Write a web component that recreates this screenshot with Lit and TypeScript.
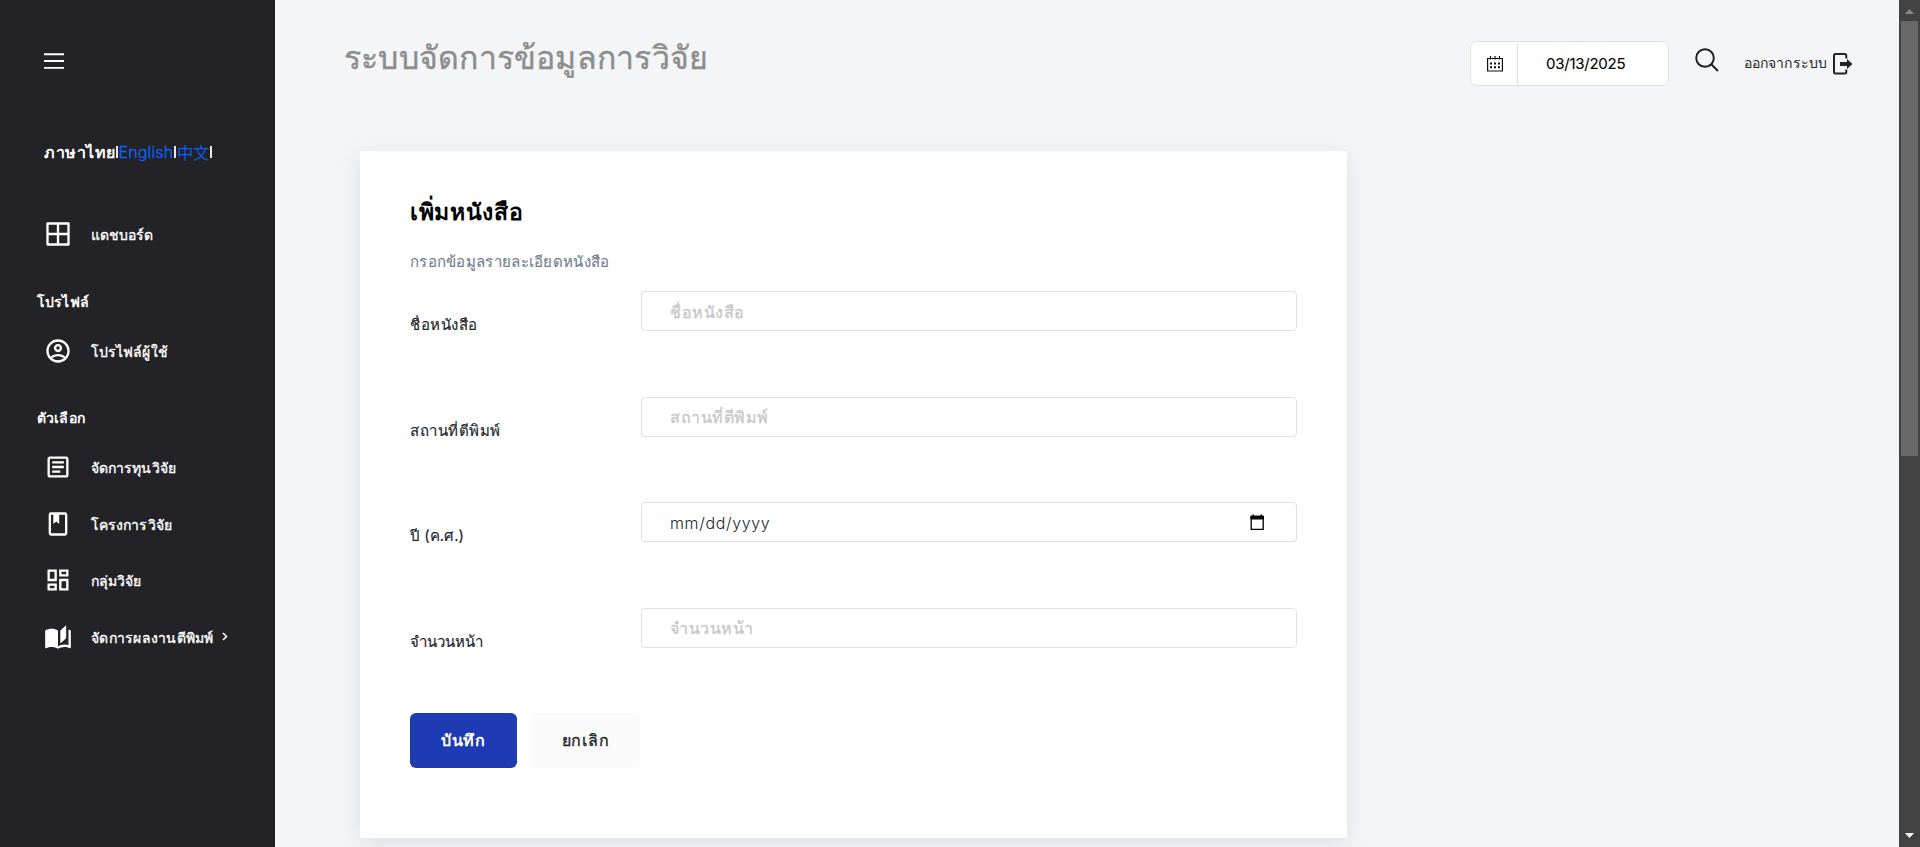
import { LitElement, html, css, svg, nothing } from "lit";
import { customElement } from "lit/decorators.js";

const icons = {
  dashboard: svg`<path d="M21 2H3a1 1 0 0 0-1 1v18a1 1 0 0 0 1 1h18a1 1 0 0 0 1-1V3a1 1 0 0 0-1-1zm-10 18H4v-7h7v7zm0-9H4V4h7v7zm9 9h-7v-7h7v7zm0-9h-7V4h7v7z"/>`,
  user: svg`<path d="M12 2A10 10 0 0 0 2 12a10 10 0 0 0 10 10 10 10 0 0 0 10-10A10 10 0 0 0 12 2M7.07 18.28c.43-.9 3.05-1.78 4.93-1.78s4.5.88 4.93 1.78A7.9 7.9 0 0 1 12 20c-1.86 0-3.57-.64-4.93-1.72m11.29-1.45c-1.43-1.74-4.9-2.33-6.36-2.33s-4.93.59-6.36 2.33A7.93 7.93 0 0 1 4 12c0-4.41 3.59-8 8-8s8 3.59 8 8c0 1.82-.62 3.5-1.64 4.83M12 6c-1.94 0-3.5 1.56-3.5 3.5S10.06 13 12 13s3.5-1.56 3.5-3.5S13.94 6 12 6m0 5a1.5 1.5 0 0 1-1.5-1.5A1.5 1.5 0 0 1 12 8a1.5 1.5 0 0 1 1.5 1.5A1.5 1.5 0 0 1 12 11z"/>`,
  note: svg`<path d="M5 3c-1.11 0-2 .89-2 2v14c0 1.11.89 2 2 2h14c1.11 0 2-.89 2-2V5c0-1.11-.89-2-2-2H5m0 2h14v14H5V5m2 2v2h10V7H7m0 4v2h10v-2H7m0 4v2h7v-2H7z"/>`,
  book: svg`<path d="M18 2a2 2 0 0 1 2 2v16a2 2 0 0 1-2 2H6a2 2 0 0 1-2-2V4a2 2 0 0 1 2-2h12m0 2h-5v8l-2.5-2.25L8 12V4H6v16h12V4z"/>`,
  group: svg`<path d="M19 5v2h-4V5h4M9 5v6H5V5h4m10 8v6h-4v-6h4M9 17v2H5v-2h4M21 3h-8v6h8V3M11 3H3v10h8V3m10 8h-8v10h8V11m-10 4H3v6h8v-6z"/>`,
  open: svg`<path d="M19 2l-5 4.500v11l5-4.500V2M6.500 5C4.550 5 2.450 5.400 1 6.500v14.660c0 .250.250.500.500.500.100 0 .150-.070.250-.070 1.350-.650 3.300-1.090 4.750-1.090 1.950 0 4.050.400 5.500 1.500 1.350-.850 3.800-1.500 5.500-1.500 1.650 0 3.350.310 4.750 1.060.100.050.150.030.250.030.250 0 .500-.250.500-.500V6.500c-.600-.450-1.250-.750-2-1V19c-1.100-.350-2.300-.500-3.500-.500-1.700 0-4.150.650-5.500 1.500V6.500C10.550 5.400 8.450 5 6.500 5z"/>`,
};

const shared = css`
  * { box-sizing: border-box; }
  svg { display: block; flex: none; }
`;

@customElement("side-bar")
export class SideBar extends LitElement {
  static styles = [shared, css`
    :host { display: flex; flex-direction: column; width: 275px; flex: none; background: #232227; color: #fff; font-size: 14px; }
    .burger { margin: 52px 0 0 44px; }
    .langs { display: flex; align-items: center; margin: 69px 0 0 44px; height: 26px; font-size: 16px; white-space: nowrap; font-weight: 300; }
    .current { font-weight: 700; letter-spacing: .5px; }
    .lang { color: #0d62ff; -webkit-text-stroke: .3px #0d62ff; }
    .english { letter-spacing: .15px; }
    .bar { width: 2px; height: 12px; margin: 0 1px 0 1px; background: #e8e8ea; }
    .current + .bar { margin-left: 0; }
    .first { margin-top: 41px; }
    .item { display: flex; align-items: center; height: 56.5px; padding-left: 44px; white-space: nowrap; -webkit-text-stroke: .35px #fff; }
    .icon { width: 28px; height: 28px; margin-right: 19px; fill: #fff; }
    .text { padding-top: 1.5px; letter-spacing: .08px; }
    .head { height: 24px; line-height: 24px; padding-left: 37px; font-weight: 700; letter-spacing: .15px; margin: 27px 0 9px; }
    .wide { letter-spacing: .25px; }
    .chev { margin-left: 8px; }
  `];
  item(icon: keyof typeof icons, label: string, more = false) {
    return html`<div class="item"><svg class="icon" viewBox="0 0 24 24">${icons[icon]}</svg><span class="text ${more ? "wide" : ""}">${label}</span>${more
      ? html`<svg class="chev" width="6" height="9" viewBox="0 0 6 9" fill="none" stroke="#fff" stroke-width="1.6"><path d="M1 1l3.500 3.500L1 8"/></svg>` : nothing}</div>`;
  }
  render() {
    return html`
      <svg class="burger" width="20" height="18" viewBox="0 0 20 18" stroke="#fff" stroke-width="1.9"><path d="M0 2.200h20M0 9h20M0 15.900h20"/></svg>
      <div class="langs"><span class="current">ภาษาไทย</span><i class="bar"></i><span class="lang english">English</span><i class="bar"></i><span class="lang">中文</span><i class="bar"></i></div>
      <div class="first">${this.item("dashboard", "แดชบอร์ด")}</div>
      <div class="head">โปรไฟล์</div>
      ${this.item("user", "โปรไฟล์ผู้ใช้")}
      <div class="head">ตัวเลือก</div>
      ${this.item("note", "จัดการทุนวิจัย")}
      ${this.item("book", "โครงการวิจัย")}
      ${this.item("group", "กลุ่มวิจัย")}
      ${this.item("open", "จัดการผลงานตีพิมพ์", true)}
    `;
  }
}

@customElement("top-bar")
export class TopBar extends LitElement {
  static styles = [shared, css`
    :host { display: flex; height: 151px; padding: 41px 46px 0 69px; align-items: flex-start; }
    .title { margin: -11px auto 0 0; font-size: 32px; font-weight: 400; line-height: 56px; color: #8d8d8d; -webkit-text-stroke: .4px #8d8d8d; white-space: nowrap; letter-spacing: .22px; }
    .date { display: flex; width: 199px; height: 45px; border: 1px solid #dee0e3; border-radius: 7px; background: #fff; padding: 1px 0; }
    .cal { width: 47px; border-right: 1px solid #dcdee1; padding: 13px 0 0 16px; }
    .value { padding-left: 28px; line-height: 41px; font-size: 15px; font-weight: 400; letter-spacing: -.25px; color: #000; -webkit-text-stroke: .1px #000; }
    .search { margin: 7px 25px 0 26px; }
    .logout { display: flex; font-size: 14px; line-height: 44px; color: #212529; white-space: nowrap; letter-spacing: .1px; }
    .exit { margin: 12px 0 0 6px; }
  `];
  render() {
    return html`
      <h1 class="title">ระบบจัดการข้อมูลการวิจัย</h1>
      <div class="date">
        <div class="cal"><svg width="16" height="16" viewBox="0 0 16 16" fill="none" stroke="#111" stroke-width="1.200"><path d="M.6 2.500h14.800v12.500H.6zM3.500 0v3.500M8 0v3.500M12.500 0v3.500"/><path stroke-width="1.900" stroke-dasharray="2 2" d="M3 7.500h10M3 11.200h10"/></svg></div>
        <div class="value">03/13/2025</div>
      </div>
      <svg class="search" width="24" height="24" viewBox="0 0 24 24" fill="none" stroke="#1b1b20" stroke-width="1.900"><circle cx="10" cy="10" r="8.800"/><path d="M16 16l7 7"/></svg>
      <div class="logout"><span>ออกจากระบบ</span>
        <svg class="exit" width="20" height="22" viewBox="0 0 20 22"><path d="M13.300 5.500V2.500Q13.300 1 11.800 1H2.500Q1 1 1 2.500v16.500q0 1.500 1.500 1.500h9.300q1.500 0 1.500-1.500v-2.500" fill="none" stroke="#212529" stroke-width="2"/><path d="M7 9h7V6l5.500 5-5.500 5v-3H7z" fill="#212529"/></svg>
      </div>`;
  }
}

@customElement("book-form")
export class BookForm extends LitElement {
  static styles = [shared, css`
    :host { display: block; width: 987px; height: 687px; margin-left: 85px; padding: 41px 50px 0 50px; background: #fff; box-shadow: 0 5px 20px rgba(40, 45, 65, .11); }
    .title { margin: 0; font-size: 23px; line-height: 40px; letter-spacing: .7px; color: #000; }
    .hint { margin: 17px 0 16px; height: 26px; line-height: 26px; font-size: 15px; letter-spacing: .3px; color: #748090; -webkit-text-stroke: .15px #748090; }
    .row { display: grid; grid-template-columns: 231px 656px; height: 105.67px; align-items: start; }
    .label { margin-top: 21px; font-size: 15px; line-height: 26px; letter-spacing: .55px; color: #212529; -webkit-text-stroke: .15px #212529; }
    .tight { letter-spacing: .02px; }
    .box { display: flex; align-items: center; height: 40px; border: 1px solid #dee2e6; border-radius: 4px; padding: 0 31px 0 28px; }
    .input { flex: 1; min-width: 0; border: 0; outline: 0; padding: 1px 0 0; background: none; font: 400 16px/24px Inter, "Noto Sans", sans-serif; }
    .input::placeholder { color: #c9c8c8; opacity: 1; letter-spacing: .55px; -webkit-text-stroke: .35px #c9c8c8; }
    .date::placeholder { color: #212529; font-weight: 300; letter-spacing: .65px; -webkit-text-stroke: 0; }
    .actions { display: flex; gap: 14px; margin-top: -1px; }
    .btn { height: 55px; width: 107px; border: 0; border-radius: 6px; background: #1f3bb3; color: #fff; font: 600 16px Inter, "Noto Sans", sans-serif; letter-spacing: .8px; padding: 0; }
    .light { width: 109px; background: #fbfbfb; color: #212529; font-weight: 500; -webkit-text-stroke: .35px #212529; }
  `];
  row(label: string, placeholder: string, date = false, tight = false) {
    return html`<div class="row"><label class="label ${tight ? "tight" : ""}">${label}</label><div class="box"><input class="input ${date ? "date" : ""}" placeholder=${placeholder}>${date
      ? html`<svg width="16" height="17" viewBox="0 0 16 17"><path d="M2.200 2.500h12v12.800h-12z" fill="none" stroke="#000" stroke-width="1.300"/><path d="M1.500 1.800h13.400V5.500H1.500zM3.500.500h1.500v2H3.500zM11.500.500H13v2h-1.500z"/></svg>` : nothing}</div></div>`;
  }
  render() {
    return html`
      <h4 class="title">เพิ่มหนังสือ</h4>
      <p class="hint">กรอกข้อมูลรายละเอียดหนังสือ</p>
      ${this.row("ชื่อหนังสือ", "ชื่อหนังสือ")}
      ${this.row("สถานที่ตีพิมพ์", "สถานที่ตีพิมพ์")}
      ${this.row("ปี (ค.ศ.)", "mm/dd/yyyy", true, true)}
      ${this.row("จำนวนหน้า", "จำนวนหน้า", false, true)}
      <div class="actions"><button class="btn">บันทึก</button><button class="btn light">ยกเลิก</button></div>`;
  }
}

@customElement("app-root")
export class AppRoot extends LitElement {
  static styles = [shared, css`
    :host { display: flex; height: 847px; overflow: hidden; background: #f4f5f7; font-family: Inter, "Noto Sans", "Noto Sans CJK SC", sans-serif; }
    .main { flex: 1; min-width: 0; }
    .scroll { display: flex; flex-direction: column; align-items: center; width: 21px; background: #424242; padding: 9px 0; }
    .thumb { width: 17px; height: 435px; margin: 7px 0 auto; background: #686868; }
  `];
  render() {
    return html`
      <side-bar></side-bar>
      <main class="main"><top-bar></top-bar><book-form></book-form></main>
      <div class="scroll">
        <svg width="9" height="5" viewBox="0 0 9 5"><path d="M0 5L4.500 0 9 5z" fill="#868686"/></svg>
        <div class="thumb"></div>
        <svg width="9" height="5" viewBox="0 0 9 5"><path d="M0 0h9L4.500 5z" fill="#fff"/></svg>
      </div>`;
  }
}
